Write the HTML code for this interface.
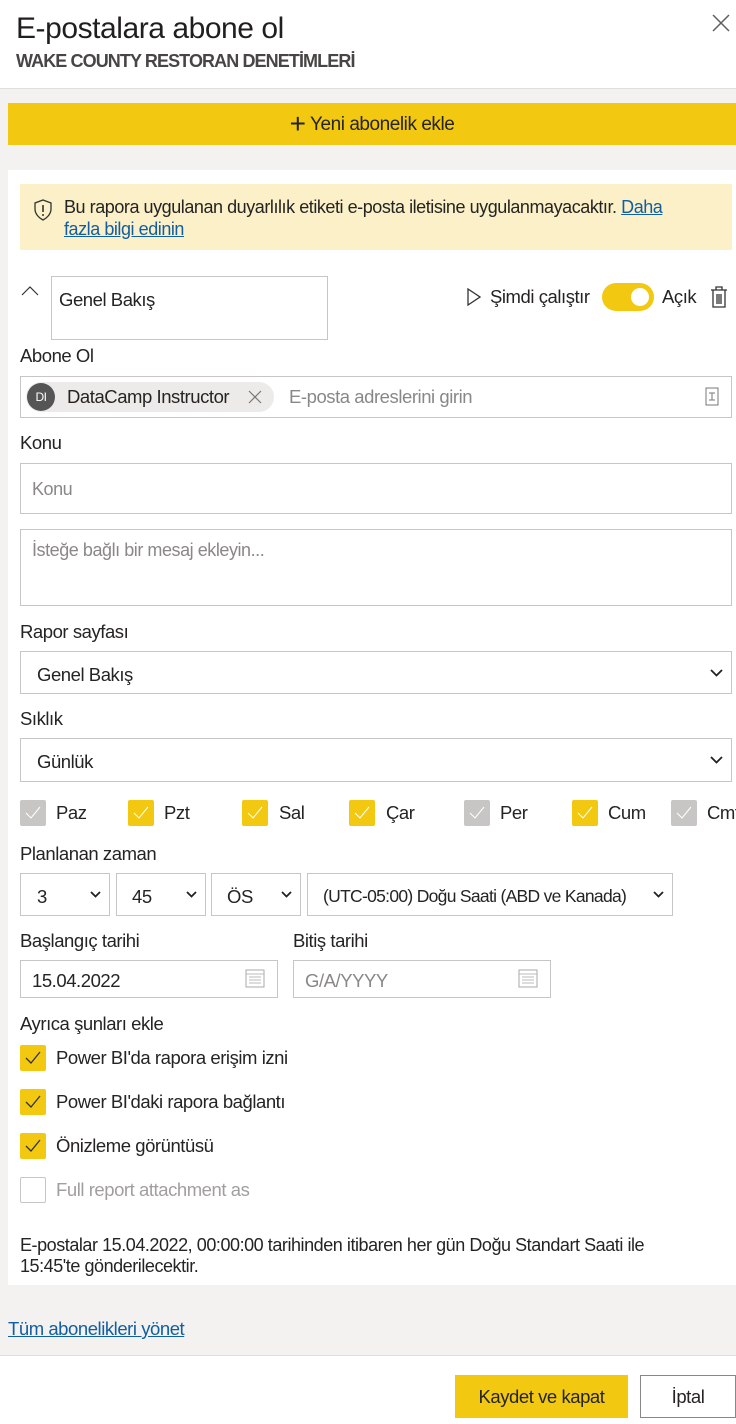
<!DOCTYPE html>
<html><head><meta charset="utf-8"><style>
*{box-sizing:border-box;margin:0;padding:0}
body{width:736px;height:1424px;overflow:hidden;background:#fff;font-family:"Liberation Sans",sans-serif;color:#252423;font-size:18.5px;letter-spacing:-0.45px;position:relative}
.a{position:absolute;white-space:nowrap}
.box{position:absolute;border:1px solid #c8c6c4;background:#fff}
.lbl{position:absolute;font-size:18.5px;white-space:nowrap}
.cb{position:absolute;width:26px;height:26px;border-radius:2px}
.y{background:#f2c811}.g{background:#c8c6c4}
.cb svg{position:absolute;left:5px;top:6px}
.sel svg{position:absolute;right:8px;top:50%;margin-top:-4px}
</style></head><body>
<div class="a" style="left:16px;top:12px;font-size:30px;color:#201f1e">E-postalara abone ol</div>
<div class="a" style="left:16px;top:51px;font-size:18px;font-weight:bold;color:#484644;letter-spacing:-0.9px">WAKE COUNTY RESTORAN DENETİMLERİ</div>
<svg class="a" style="left:712px;top:14px" width="18" height="18"><path d="M1 1L17 17M17 1L1 17" stroke="#605e5c" stroke-width="1.5"/></svg>
<div class="a" style="left:0;top:88px;width:736px;height:1267px;background:#f3f2f1;border-top:1px solid #e1dfdd"></div>
<div class="a" style="left:8px;top:103px;width:728px;height:42px;background:#f2c811;text-align:center;line-height:42px;font-size:19px"><span style="font-size:28px;font-weight:300;vertical-align:-3px">+</span> Yeni abonelik ekle</div>
<div class="a" style="left:8px;top:170px;width:728px;height:1115px;background:#fff"></div>
<div class="a" style="left:20px;top:184px;width:712px;height:66px;background:#fbf0c8"></div>
<svg class="a" style="left:33px;top:199px" width="20" height="22"><path d="M10 1L18 4V10C18 15 14 19 10 21C6 19 2 15 2 10V4Z" fill="none" stroke="#333" stroke-width="1.3"/><path d="M10 6V13" stroke="#333" stroke-width="1.6"/><circle cx="10" cy="16" r="1" fill="#333"/></svg>
<div class="a" style="left:64px;top:196px;width:625px;font-size:18px;line-height:22px;white-space:normal">Bu rapora uygulanan duyarlılık etiketi e-posta iletisine uygulanmayacaktır. <span style="color:#115ea3;text-decoration:underline">Daha fazla bilgi edinin</span></div>
<svg class="a" style="left:21px;top:286px" width="18" height="10"><path d="M1 9L9 1L17 9" fill="none" stroke="#333" stroke-width="1.2"/></svg>
<div class="box" style="left:51px;top:276px;width:277px;height:64px"><div class="a" style="left:7px;top:12px">Genel Bakış</div></div>
<svg class="a" style="left:467px;top:288px" width="14" height="18"><path d="M1 1L13 9L1 17Z" fill="none" stroke="#333" stroke-width="1.3"/></svg>
<div class="a" style="left:490px;top:286px">Şimdi çalıştır</div>
<div class="a" style="left:602px;top:283px;width:52px;height:28px;border-radius:14px;background:#f2c811"><div class="a" style="left:29px;top:5px;width:18px;height:18px;border-radius:9px;background:#fff"></div></div>
<div class="a" style="left:662px;top:286px">Açık</div>
<svg class="a" style="left:710px;top:286px" width="18" height="22"><path d="M1 4H17M6 4V1H12V4M3 4V21H15V4M7 8V18M9 8V18M11 8V18" fill="none" stroke="#333" stroke-width="1.3"/></svg>
<div class="lbl" style="left:20px;top:345px">Abone Ol</div>
<div class="box" style="left:20px;top:376px;width:712px;height:42px"></div>
<div class="a" style="left:26px;top:382px;width:248px;height:30px;border-radius:15px;background:#edebe9"></div>
<div class="a" style="left:27px;top:383px;width:28px;height:28px;border-radius:14px;background:#555;color:#fff;font-size:12px;text-align:center;line-height:28px">DI</div>
<div class="a" style="left:67px;top:386px">DataCamp Instructor</div>
<svg class="a" style="left:248px;top:390px" width="14" height="14"><path d="M1 1L13 13M13 1L1 13" stroke="#777" stroke-width="1.2"/></svg>
<div class="a" style="left:289px;top:386px;color:#8a8886">E-posta adreslerini girin</div>
<svg class="a" style="left:705px;top:387px" width="14" height="19"><rect x="1" y="1" width="12" height="17" fill="none" stroke="#777"/><path d="M4 6H10M7 6V13M4 13H10" stroke="#777"/></svg>
<div class="lbl" style="left:20px;top:432px">Konu</div>
<div class="box" style="left:20px;top:463px;width:712px;height:51px"><div class="a" style="left:11px;top:15px;color:#8a8886;font-size:18px">Konu</div></div>
<div class="box" style="left:20px;top:529px;width:712px;height:77px"><div class="a" style="left:11px;top:10px;color:#8a8886;font-size:18px">İsteğe bağlı bir mesaj ekleyin...</div></div>
<div class="lbl" style="left:20px;top:621px">Rapor sayfası</div>
<div class="box sel" style="left:20px;top:651px;width:712px;height:43px"><div class="a" style="left:16px;top:12px">Genel Bakış</div><svg width="13" height="8"><path d="M1 1L6.5 6.5L12 1" fill="none" stroke="#222" stroke-width="1.8"/></svg></div>
<div class="lbl" style="left:20px;top:708px">Sıklık</div>
<div class="box sel" style="left:20px;top:738px;width:712px;height:44px"><div class="a" style="left:16px;top:12px">Günlük</div><svg width="13" height="8"><path d="M1 1L6.5 6.5L12 1" fill="none" stroke="#222" stroke-width="1.8"/></svg></div>

<div class="cb g" style="left:20px;top:800px"><svg width="16" height="14"><path d="M1 7L6 12L15 1" fill="none" stroke="#fff" stroke-width="1"/></svg></div><div class="lbl" style="left:56px;top:802px">Paz</div>
<div class="cb y" style="left:128px;top:800px"><svg width="16" height="14"><path d="M1 7L6 12L15 1" fill="none" stroke="#fff" stroke-width="1"/></svg></div><div class="lbl" style="left:164px;top:802px">Pzt</div>
<div class="cb y" style="left:242px;top:800px"><svg width="16" height="14"><path d="M1 7L6 12L15 1" fill="none" stroke="#fff" stroke-width="1"/></svg></div><div class="lbl" style="left:279px;top:802px">Sal</div>
<div class="cb y" style="left:349px;top:800px"><svg width="16" height="14"><path d="M1 7L6 12L15 1" fill="none" stroke="#fff" stroke-width="1"/></svg></div><div class="lbl" style="left:386px;top:802px">Çar</div>
<div class="cb g" style="left:464px;top:800px"><svg width="16" height="14"><path d="M1 7L6 12L15 1" fill="none" stroke="#fff" stroke-width="1"/></svg></div><div class="lbl" style="left:500px;top:802px">Per</div>
<div class="cb y" style="left:572px;top:800px"><svg width="16" height="14"><path d="M1 7L6 12L15 1" fill="none" stroke="#fff" stroke-width="1"/></svg></div><div class="lbl" style="left:608px;top:802px">Cum</div>
<div class="cb g" style="left:671px;top:800px"><svg width="16" height="14"><path d="M1 7L6 12L15 1" fill="none" stroke="#fff" stroke-width="1"/></svg></div><div class="lbl" style="left:707px;top:802px">Cmt</div>

<div class="lbl" style="left:20px;top:843px">Planlanan zaman</div>
<div class="box sel" style="left:20px;top:873px;width:90px;height:43px"><div class="a" style="left:16px;top:12px">3</div><svg width="11" height="7"><path d="M1 1L5.5 5.5L10 1" fill="none" stroke="#222" stroke-width="1.8"/></svg></div>
<div class="box sel" style="left:116px;top:873px;width:90px;height:43px"><div class="a" style="left:15px;top:12px">45</div><svg width="11" height="7"><path d="M1 1L5.5 5.5L10 1" fill="none" stroke="#222" stroke-width="1.8"/></svg></div>
<div class="box sel" style="left:211px;top:873px;width:90px;height:43px"><div class="a" style="left:15px;top:12px">ÖS</div><svg width="11" height="7"><path d="M1 1L5.5 5.5L10 1" fill="none" stroke="#222" stroke-width="1.8"/></svg></div>
<div class="box sel" style="left:307px;top:873px;width:366px;height:43px;overflow:hidden"><div class="a" style="left:15px;top:12px;font-size:17.5px;letter-spacing:-0.7px">(UTC-05:00) Doğu Saati (ABD ve Kanada)</div><svg width="11" height="7"><path d="M1 1L5.5 5.5L10 1" fill="none" stroke="#222" stroke-width="1.8"/></svg></div>
<div class="lbl" style="left:20px;top:930px">Başlangıç tarihi</div>
<div class="lbl" style="left:293px;top:930px">Bitiş tarihi</div>
<div class="box" style="left:20px;top:960px;width:258px;height:38px"><div class="a" style="left:11px;top:9px">15.04.2022</div><svg class="a" style="left:224px;top:7px" width="20" height="20"><rect x="1" y="2" width="18" height="17" fill="none" stroke="#aaa"/><path d="M1 6H19M4 9H16M4 12H16M4 15H16" stroke="#bbb"/></svg></div>
<div class="box" style="left:293px;top:960px;width:258px;height:38px"><div class="a" style="left:11px;top:9px;color:#8a8886">G/A/YYYY</div><svg class="a" style="left:224px;top:7px" width="20" height="20"><rect x="1" y="2" width="18" height="17" fill="none" stroke="#aaa"/><path d="M1 6H19M4 9H16M4 12H16M4 15H16" stroke="#bbb"/></svg></div>
<div class="lbl" style="left:20px;top:1013px">Ayrıca şunları ekle</div>
<div class="cb y" style="left:20px;top:1045px"><svg width="16" height="14"><path d="M1 7L6 12L15 1" fill="none" stroke="#333" stroke-width="1.3"/></svg></div><div class="lbl" style="left:56px;top:1047px">Power BI'da rapora erişim izni</div>
<div class="cb y" style="left:20px;top:1089px"><svg width="16" height="14"><path d="M1 7L6 12L15 1" fill="none" stroke="#333" stroke-width="1.3"/></svg></div><div class="lbl" style="left:56px;top:1091px">Power BI'daki rapora bağlantı</div>
<div class="cb y" style="left:20px;top:1133px"><svg width="16" height="14"><path d="M1 7L6 12L15 1" fill="none" stroke="#333" stroke-width="1.3"/></svg></div><div class="lbl" style="left:56px;top:1135px">Önizleme görüntüsü</div>
<div class="cb" style="left:20px;top:1177px;border:1px solid #c8c6c4"></div><div class="lbl" style="left:56px;top:1179px;color:#a19f9d">Full report attachment as</div>
<div class="a" style="left:20px;top:1235px;width:665px;font-size:18px;line-height:21px;white-space:normal">E-postalar 15.04.2022, 00:00:00 tarihinden itibaren her gün Doğu Standart Saati ile 15:45'te gönderilecektir.</div>
<div class="a" style="left:8px;top:1318px;color:#115ea3;text-decoration:underline">Tüm abonelikleri yönet</div>
<div class="a" style="left:0;top:1355px;width:736px;height:1px;background:#e1dfdd"></div>
<div class="a" style="left:455px;top:1375px;width:173px;height:43px;background:#f2c811;text-align:center;line-height:43px">Kaydet ve kapat</div>
<div class="a" style="left:640px;top:1375px;width:96px;height:43px;border:1px solid #8a8886;text-align:center;line-height:41px">İptal</div>
</body></html>
